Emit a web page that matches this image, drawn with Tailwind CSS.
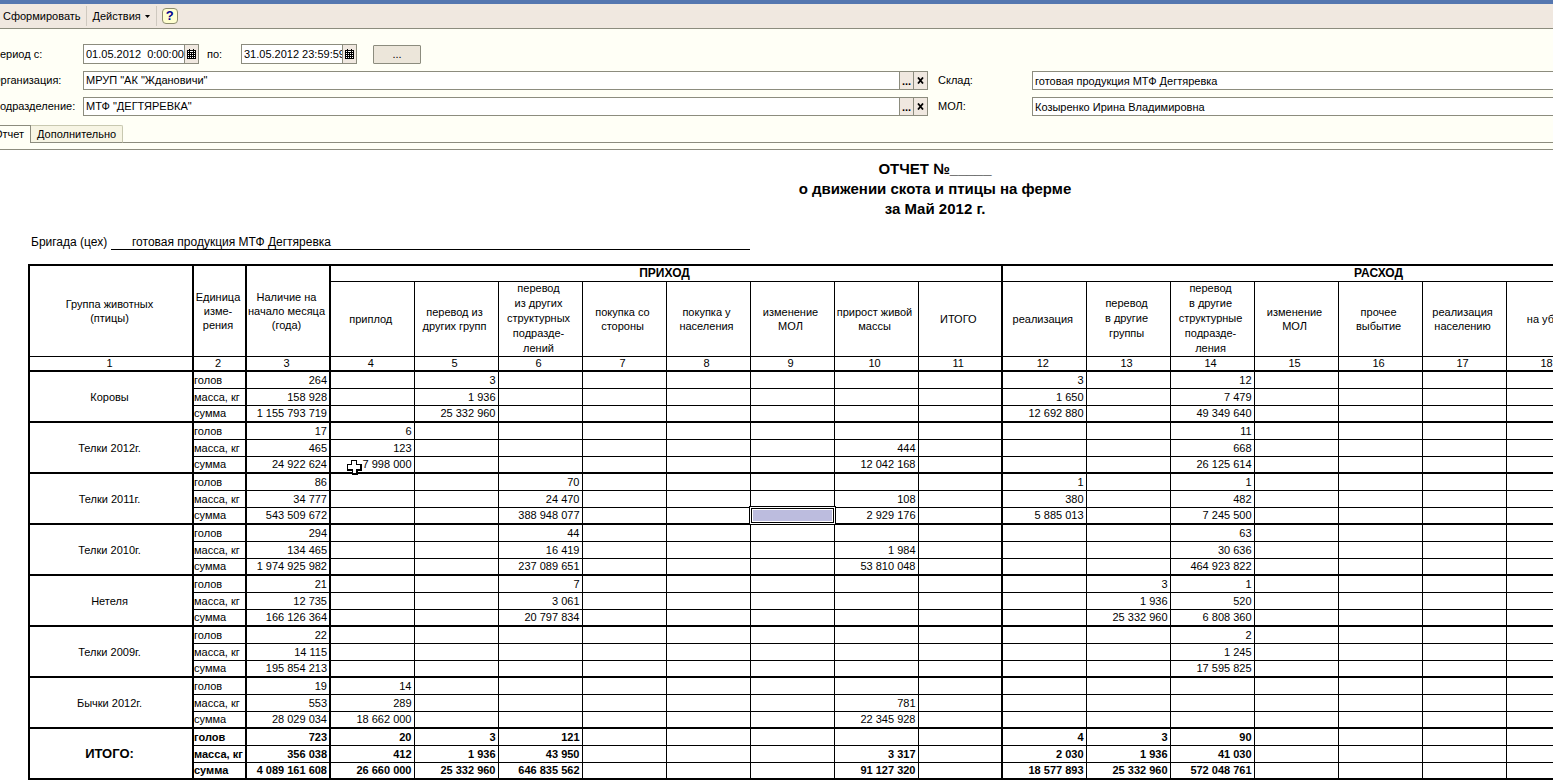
<!DOCTYPE html>
<html lang="ru">
<head>
<meta charset="utf-8">
<title>Отчет о движении скота и птицы на ферме</title>
<script src="https://cdn.jsdelivr.net/npm/@tailwindcss/browser@4"></script>
</head>
<body class="h-screen overflow-hidden bg-white font-['Liberation_Sans',Arial,sans-serif] text-[11px] text-black flex flex-col">
<header class="shrink-0 border-t-4 border-[#5577b0] border-b border-b-[#8c8c7e] bg-[#f0e8e0] h-[29px] flex items-center">
  <button class="h-5 pl-[3px] pr-[5px] border-r border-[#cfc9c0]">Сформировать</button>
  <button class="h-5 px-[6px] border-r border-[#cfc9c0] flex items-center gap-1">Действия
    <svg class="w-[5px] h-[3px]" viewBox="0 0 5 3"><path d="M0 0h5L2.5 3z"/></svg>
  </button>
  <button aria-label="Справка" class="ml-[5px] size-4 rounded-[4px] border border-[#8c8c6e] bg-[#ffffd0] font-bold text-[#000090] text-[13px] leading-[14px]">?</button>
</header>

<section class="shrink-0 bg-[#fffff6] border-b border-[#8c8c7e] h-[121px] flex flex-col justify-between overflow-hidden">
  <form class="pt-[15px] -ml-2 flex flex-col gap-[7px]">
    <div class="flex items-center h-5">
      <label for="from" class="w-[91px]">Период с:</label>
      <div class="flex w-[116px] h-5 border border-[#8c8c7e] bg-white">
        <input id="from" class="min-w-0 flex-1 pl-[2px] outline-none" value="01.05.2012  0:00:00">
        <button type="button" aria-label="Календарь" class="w-[14px] border-l border-[#8c8c7e] bg-[#f0e8e0] flex items-center justify-center">
          <svg class="w-[9px] h-[10px]" viewBox="0 0 9 10" shape-rendering="crispEdges"><path d="M0 1h9v9H0z"/><path d="M2 0h1v1H2zM6 0h1v1H6z"/><path fill="#fff" d="M1 2h1v1H1zM3 2h3v1H3zM7 2h1v1H7zM1 4h1v1H1zM3 4h1v1H3zM5 4h1v1H5zM7 4h1v1H7zM1 6h1v1H1zM3 6h1v1H3zM5 6h1v1H5zM7 6h1v1H7zM1 8h1v1H1zM3 8h1v1H3zM5 8h1v1H5zM7 8h1v1H7z"/></svg>
        </button>
      </div>
      <label for="to" class="w-[42px] pl-2">по:</label>
      <div class="flex w-[116px] h-5 border border-[#8c8c7e] bg-white">
        <input id="to" class="min-w-0 flex-1 pl-[2px] outline-none" value="31.05.2012 23:59:59">
        <button type="button" aria-label="Календарь" class="w-[14px] border-l border-[#8c8c7e] bg-[#f0e8e0] flex items-center justify-center">
          <svg class="w-[9px] h-[10px]" viewBox="0 0 9 10" shape-rendering="crispEdges"><path d="M0 1h9v9H0z"/><path d="M2 0h1v1H2zM6 0h1v1H6z"/><path fill="#fff" d="M1 2h1v1H1zM3 2h3v1H3zM7 2h1v1H7zM1 4h1v1H1zM3 4h1v1H3zM5 4h1v1H5zM7 4h1v1H7zM1 6h1v1H1zM3 6h1v1H3zM5 6h1v1H5zM7 6h1v1H7zM1 8h1v1H1zM3 8h1v1H3zM5 8h1v1H5zM7 8h1v1H7z"/></svg>
        </button>
      </div>
      <button type="button" class="ml-4 w-12 h-[19px] border border-[#8c8c7e] rounded-[1px] bg-[#ece6da] leading-4">...</button>
    </div>
    <div class="grid grid-cols-[91px_minmax(0,845fr)_104px_minmax(0,521fr)] items-center gap-y-[7px]">
      <label for="org">Организация:</label>
      <div class="flex h-[19px] border border-[#8c8c7e] bg-white">
        <input id="org" class="min-w-0 flex-1 pl-[2px] outline-none" value='МРУП "АК "Ждановичи"'>
        <button type="button" class="w-[14px] border-l border-[#8c8c7e] bg-[#f0e8e0] leading-3 font-bold">...</button>
        <button type="button" aria-label="Очистить" class="w-[14px] border-l border-[#8c8c7e] bg-[#f0e8e0] flex items-center justify-center"><svg class="w-[7px] h-[7px]" viewBox="0 0 7 7"><path d="M1 .5l5 6M6 .5l-5 6" stroke="#000" stroke-width="1.8"/></svg></button>
      </div>
      <label for="store" class="pl-[10px]">Склад:</label>
      <input id="store" class="w-full h-[19px] border border-r-0 border-[#8c8c7e] bg-white pl-[2px] outline-none" value="готовая продукция МТФ Дегтяревка">
      <label for="dept">Подразделение:</label>
      <div class="flex h-[19px] border border-[#8c8c7e] bg-white">
        <input id="dept" class="min-w-0 flex-1 pl-[2px] outline-none" value='МТФ "ДЕГТЯРЕВКА"'>
        <button type="button" class="w-[14px] border-l border-[#8c8c7e] bg-[#f0e8e0] leading-3 font-bold">...</button>
        <button type="button" aria-label="Очистить" class="w-[14px] border-l border-[#8c8c7e] bg-[#f0e8e0] flex items-center justify-center"><svg class="w-[7px] h-[7px]" viewBox="0 0 7 7"><path d="M1 .5l5 6M6 .5l-5 6" stroke="#000" stroke-width="1.8"/></svg></button>
      </div>
      <label for="mol" class="pl-[10px]">МОЛ:</label>
      <input id="mol" class="w-full h-[19px] border border-r-0 border-[#8c8c7e] bg-white pl-[2px] outline-none" value="Козыренко Ирина Владимировна">
    </div>
  </form>
  <nav class="flex items-end h-[18px] mb-[6px]">
    <button class="h-[18px] -ml-3 w-[43px] pr-[6px] text-right border-t border-r border-[#8c8c7e]">Отчет</button>
    <button class="h-[18px] px-[6px] border-t border-r border-b border-t-[#c8c8b0] border-r-[#c8c8b0] border-b-[#8c8c7e] bg-[#f7f5e4] rounded-tr-[2px]">Дополнительно</button>
    <span class="flex-1 border-b border-[#8c8c7e]"></span>
  </nav>
</section>

<main class="flex-1 min-h-0 overflow-hidden">
  <h1 class="pt-[9px] pl-[317px] text-center font-bold text-[15px] leading-5">ОТЧЕТ №_____<br>о движении скота и птицы на ферме<br>за Май 2012 г.</h1>
  <div class="mt-[15px] ml-[31px] h-4 flex text-xs leading-4">
    <span class="w-20">Бригада (цех)</span>
    <span class="w-[639px] pl-[21px] border-b border-black">готовая продукция МТФ Дегтяревка</span>
  </div>
  <table class="mt-[14px] ml-7 w-[1730px] table-fixed border-collapse border-2 border-black leading-[14px] [&_th]:font-normal [&_th]:p-0 [&_th]:pr-[3px] [&_th]:border [&_th]:border-black [&_td]:p-0 [&_td]:border [&_td]:border-black">
    <colgroup><col class="w-[164px]"><col class="w-[53px]"><col span="18" class="w-[84px]"></colgroup>
    <thead>
      <tr class="h-4 leading-[14px]">
        <th rowspan="2" class="border-r-2!">Группа животных<br>(птицы)</th>
        <th rowspan="2" class="border-r-2!">Единица<br>изме-<br>рения</th>
        <th rowspan="2" class="border-r-2! whitespace-nowrap">Наличие на<br>начало месяца<br>(года)</th>
        <th colspan="8" class="border-r-2! font-bold! text-xs leading-[14px]">ПРИХОД</th>
        <th colspan="9" class="font-bold! text-xs leading-[14px]">РАСХОД</th>
      </tr>
      <tr class="h-[75px]">
        <th>приплод</th><th>перевод из<br>других групп</th><th class="leading-[15px]"><div class="-my-px">перевод<br>из других<br>структурных<br>подразде-<br>лений</div></th><th>покупка со<br>стороны</th><th>покупка у<br>населения</th><th>изменение<br>МОЛ</th><th class="whitespace-nowrap">прирост живой<br>массы</th><th class="border-r-2!">ИТОГО</th>
        <th>реализация</th><th class="leading-[15px]">перевод<br>в другие<br>группы</th><th class="leading-[15px]"><div class="-my-px">перевод<br>в другие<br>структурные<br>подразде-<br>ления</div></th><th>изменение<br>МОЛ</th><th>прочее<br>выбытие</th><th>реализация<br>населению</th><th>на убой</th><th></th><th></th>
      </tr>
      <tr id="nums" class="h-[15px] leading-[13px] border-b-2 border-black"></tr>
    </thead>
    <tbody id="body"></tbody>
  </table>
</main>

<script>
// Column number -> [heads, mass, sum] for every group of animals.
const groups = [
  ['Коровы', {3:['264','158 928','1 155 793 719'],5:['3','1 936','25 332 960'],12:['3','1 650','12 692 880'],14:['12','7 479','49 349 640']}],
  ['Телки 2012г.', {3:['17','465','24 922 624'],4:['6','123','7 998 000'],10:['','444','12 042 168'],14:['11','668','26 125 614']}],
  ['Телки 2011г.', {3:['86','34 777','543 509 672'],6:['70','24 470','388 948 077'],10:['','108','2 929 176'],12:['1','380','5 885 013'],14:['1','482','7 245 500']}],
  ['Телки 2010г.', {3:['294','134 465','1 974 925 982'],6:['44','16 419','237 089 651'],10:['','1 984','53 810 048'],14:['63','30 636','464 923 822']}],
  ['Нетеля', {3:['21','12 735','166 126 364'],6:['7','3 061','20 797 834'],13:['3','1 936','25 332 960'],14:['1','520','6 808 360']}],
  ['Телки 2009г.', {3:['22','14 115','195 854 213'],14:['2','1 245','17 595 825']}],
  ['Бычки 2012г.', {3:['19','553','28 029 034'],4:['14','289','18 662 000'],10:['','781','22 345 928']}],
  ['ИТОГО:', {3:['723','356 038','4 089 161 608'],4:['20','412','26 660 000'],5:['3','1 936','25 332 960'],6:['121','43 950','646 835 562'],10:['','3 317','91 127 320'],12:['4','2 030','18 577 893'],13:['3','1 936','25 332 960'],14:['90','41 030','572 048 761']}]
];
const thick = c => (c <= 3 || c === 11) ? 'border-r-2!' : '';
let head = '';
for (let c = 1; c <= 20; c++) head += `<th class="${thick(c)}">${c}</th>`;
document.getElementById('nums').innerHTML = head;

const selection = '<div class="absolute -inset-0.5 border border-black bg-white p-px"><div class="h-full border border-black bg-white p-px"><div class="h-full bg-[#bcbcde]"></div></div></div>';
const pointer = '<svg class="absolute z-10 left-4 top-[3px] size-[15px]" viewBox="0 0 15 15" shape-rendering="crispEdges"><path d="M4 0h6v4h5v7h-4v4H5v-4H0V4h4z"/><path d="M5 1h4v4h4v4H9v4H6V9H1V5h4z" fill="#fff"/></svg>';
let html = '';
groups.forEach(([name, cols], g) => {
  const total = g === groups.length - 1;
  ['голов', 'масса, кг', 'сумма'].forEach((unit, r) => {
    html += `<tr class="h-[17px] ${total ? 'font-bold' : ''} ${r === 2 ? 'border-b-2 border-black' : ''}">`;
    if (r === 0) html += `<th rowspan="3" class="border-r-2! ${total ? 'font-bold! text-[13px]' : ''}">${name}</th>`;
    html += `<td class="border-r-2! whitespace-nowrap">${unit}</td>`;
    for (let c = 3; c <= 20; c++) {
      const selected = g === 2 && r === 2 && c === 9;
      const pointed = g === 1 && r === 2 && c === 4;
      html += `<td class="relative text-right pr-[2px]! whitespace-nowrap ${thick(c)}">${cols[c] ? cols[c][r] : ''}${selected ? selection : ''}${pointed ? pointer : ''}</td>`;
    }
    html += '</tr>';
  });
});
document.getElementById('body').innerHTML = html;
</script>
</body>
</html>
